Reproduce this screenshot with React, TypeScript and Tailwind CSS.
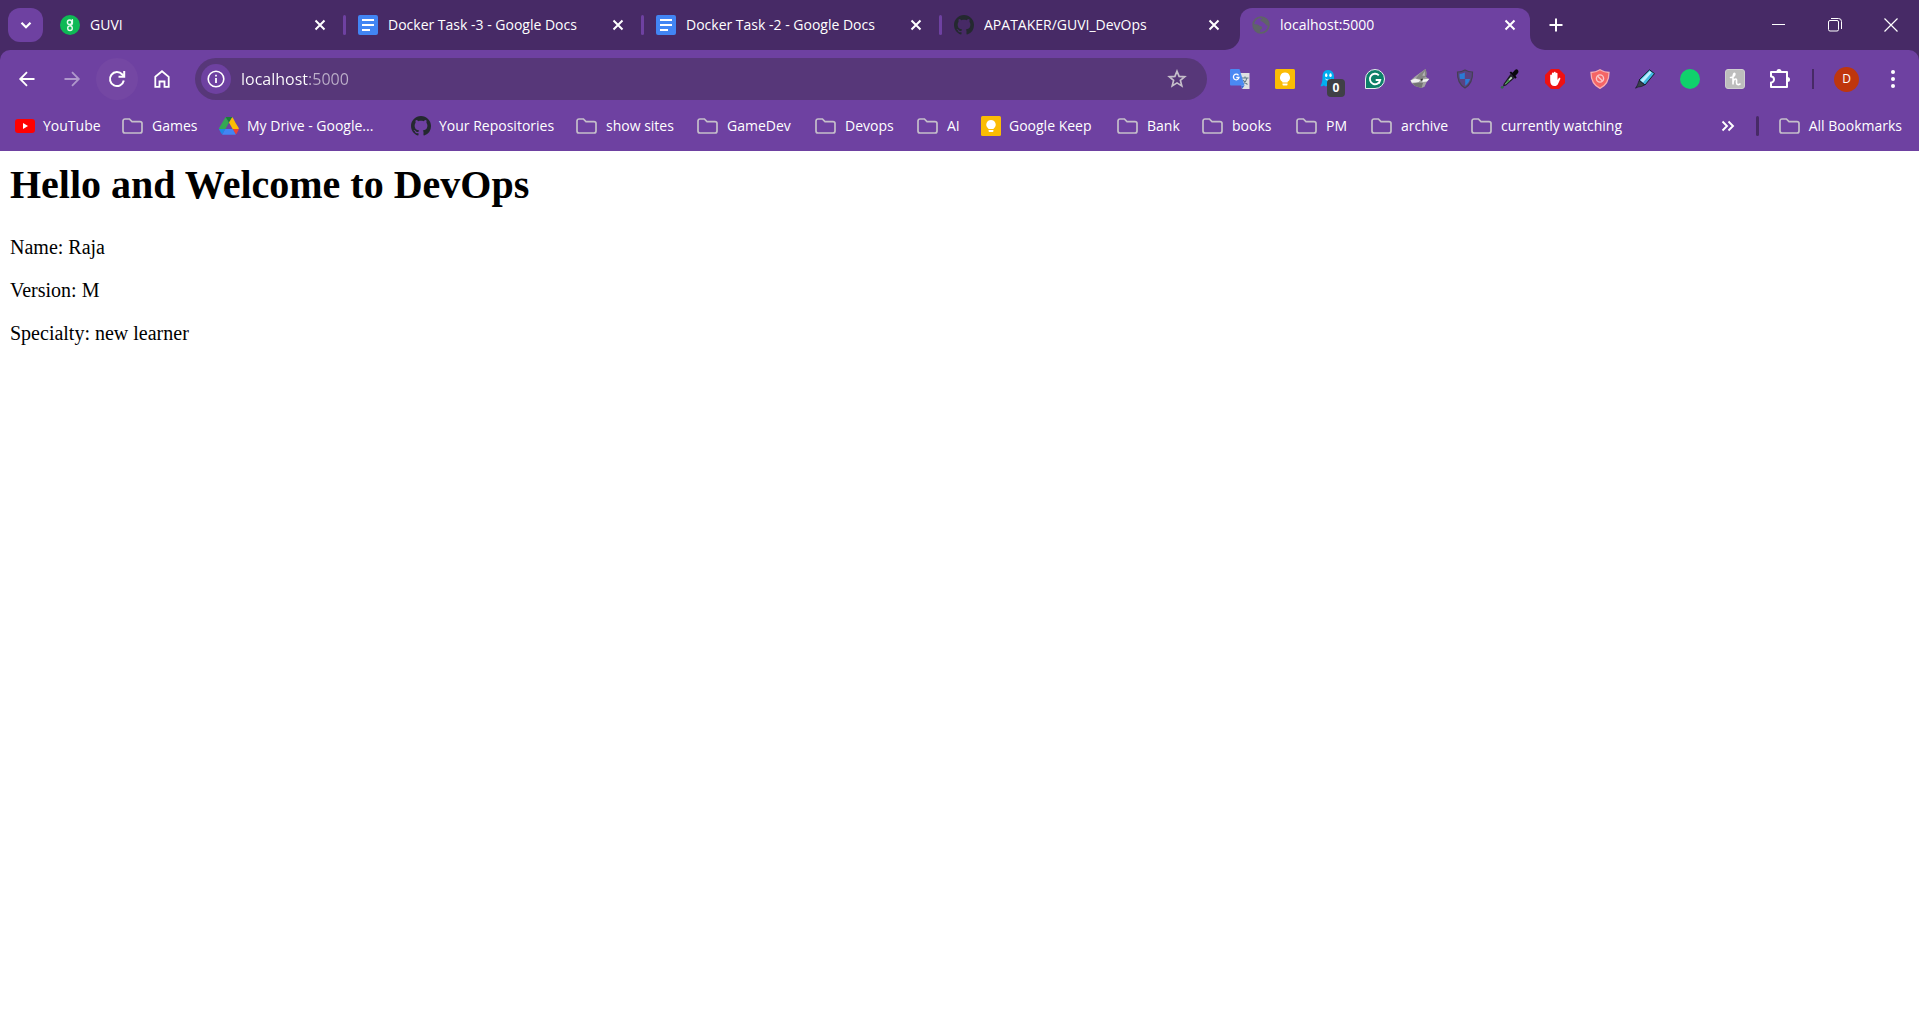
import React from "react";
import type { ReactNode } from "react";

/* ---------- Icons ---------- */

const Guvi = () => (
  <svg viewBox="0 0 20 20" className="size-5 shrink-0" aria-hidden="true">
    <circle cx="10" cy="10" r="10" fill="#0fb955" />
    <g fill="none" stroke="#e9fbf0" strokeWidth="1.4" strokeLinecap="round">
      <circle cx="9.6" cy="7.2" r="2.2" />
      <circle cx="10" cy="13.2" r="2.3" />
      <path d="M12.400 4.800v3.400c0 1.200-.9 2-2 2.200" />
    </g>
  </svg>
);

const Docs = () => (
  <svg viewBox="0 0 20 20" className="size-5 shrink-0" aria-hidden="true">
    <rect width="20" height="20" rx="2" fill="#4285f4" />
    <path d="M4 5h12M4 10h12M4 15h8" stroke="#fff" strokeWidth="2" />
  </svg>
);

const GitHub = () => (
  <svg viewBox="0 0 16 16" className="size-5 shrink-0" aria-hidden="true">
    <path
      fill="#24292f"
      d="M8 0C3.580 0 0 3.580 0 8c0 3.540 2.290 6.530 5.470 7.590.4.070.55-.17.55-.38 0-.19-.01-.82-.01-1.490-2.010.37-2.530-.49-2.690-.94-.09-.23-.48-.94-.82-1.130-.28-.15-.68-.52-.01-.53.63-.01 1.080.58 1.230.82.72 1.210 1.870.87 2.330.66.07-.52.28-.87.51-1.070-1.780-.2-3.640-.89-3.640-3.950 0-.87.31-1.590.82-2.150-.08-.2-.36-1.020.08-2.120 0 0 .67-.21 2.200.82.64-.18 1.320-.27 2-.27s1.360.09 2 .27c1.530-1.040 2.200-.82 2.200-.82.44 1.100.16 1.920.08 2.120.51.56.82 1.270.82 2.150 0 3.070-1.870 3.750-3.650 3.950.29.25.54.73.54 1.480 0 1.070-.01 1.930-.01 2.200 0 .21.15.46.55.38A8.010 8.010 0 0 0 16 8c0-4.420-3.580-8-8-8Z"
    />
  </svg>
);

const Globe = () => (
  <svg viewBox="0 0 18 18" className="size-[18px] shrink-0" aria-hidden="true">
    <circle cx="9" cy="9" r="7.800" fill="none" stroke="#5f6368" strokeWidth="1.800" />
    <path
      fill="#5f6368"
      d="M11 1.500c-.6 1.500-2 1.300-2.500 2.300-.4 1 .3 1.700 1.300 1.800 1.300.2 1.400 1.400 2.500 1.700 1.400.4 1.200 1.800 2.300 2.200 1 .3 1.700 0 2.300-.8C17 5 14.500 2 11 1.500ZM1.200 7.800c1.400.2 2.300.6 3.800.6 2 0 2.200 1.600 3.900 1.900 1.700.3 1.700 2.200.3 2.900-1.200.6-.7 2-1.700 3.600C3.500 16.300.5 12.500 1.200 7.800Z"
    />
  </svg>
);

const YouTube = () => (
  <svg viewBox="0 0 20 20" className="size-5 shrink-0" aria-hidden="true">
    <rect y="3" width="20" height="14" rx="3" fill="#f00" />
    <path d="M8 7v6l5-3z" fill="#fff" />
  </svg>
);

const Drive = () => (
  <svg viewBox="0 0 88 88" className="size-5 shrink-0" aria-hidden="true">
    <g transform="translate(0 4)">
      <path fill="#1e88e5" d="m7 67 4 7c1 1 2 2 3 3l14-24H0c0 2 0 3 1 4z" />
      <path fill="#34a853" d="M44 25 30 1c-2 1-3 2-3 3L1 48c-1 2-1 3-1 5h28z" />
      <path fill="#ea4335" d="M74 77c1-1 2-2 3-3l8-14c1-2 2-4 2-7H60l6 11z" />
      <path fill="#188038" d="M44 25 58 1c-2-1-3-1-5-1H35c-2 0-4 0-5 1z" />
      <path fill="#4285f4" d="M60 53H28L14 77c1 1 3 1 4 1h51c2 0 3 0 5-1z" />
      <path fill="#fbbc04" d="M73 27 61 4c-1-1-2-2-3-3L44 25l16 28h27c0-2 0-3-1-5z" />
    </g>
  </svg>
);

const Keep = () => (
  <svg viewBox="0 0 20 20" className="size-5 shrink-0" aria-hidden="true">
    <rect width="20" height="20" rx="1.500" fill="#fbbc04" />
    <path
      fill="#fff"
      d="M10 4a4.700 4.700 0 0 0-3 8.300c.4.300.600.500.6.700h4.800c0-.2.200-.4.600-.7A4.700 4.700 0 0 0 10 4ZM7.600 14h4.800v1.200c0 .5-.3.800-.8.800H8.400c-.5 0-.8-.3-.8-.8z"
    />
  </svg>
);

const Folder = () => (
  <svg viewBox="0 0 21 16" className="mr-px h-4 w-[21px] shrink-0" aria-hidden="true">
    <path
      d="M1 13V3a2 2 0 0 1 2-2h4.400l2.600 2.600h8a2 2 0 0 1 2 2V13a2 2 0 0 1-2 2H3a2 2 0 0 1-2-2Z"
      fill="none"
      stroke="#c5bfca"
      strokeWidth="1.700"
    />
  </svg>
);

const Close = () => (
  <svg viewBox="0 0 20 20" className="size-5" aria-hidden="true">
    <path d="m5.500 5.500 9 9m0-9-9 9" stroke="#fff" strokeWidth="2" />
  </svg>
);

/* ---------- Tab strip ---------- */

type TabProps = { icon: ReactNode; title: string; active?: boolean; divider?: boolean };

function Tab({ icon, title, active, divider }: TabProps) {
  return (
    <div
      className={
        active
          ? "relative mt-2 flex h-[42px] min-w-0 shrink basis-[290px] items-center rounded-t-xl bg-[#6e41a1] pb-2 pr-2.5 pl-3"
          : "flex h-[50px] min-w-0 shrink basis-[298px] items-center pl-3"
      }
    >
      {active && (
        <>
          <svg viewBox="0 0 15 15" className="absolute bottom-0 -left-[15px] size-[15px]" aria-hidden="true">
            <path d="M15 0v15H0A15 15 0 0 0 15 0Z" fill="#6e41a1" />
          </svg>
          <svg viewBox="0 0 15 15" className="absolute -right-[15px] bottom-0 size-[15px]" aria-hidden="true">
            <path d="M0 0v15h15A15 15 0 0 1 0 0Z" fill="#6e41a1" />
          </svg>
        </>
      )}
      <button type="button" className="flex min-w-0 flex-1 items-center gap-2.5 text-left text-sm">
        {icon}
        <span className="truncate">{title}</span>
      </button>
      <button type="button" aria-label={`Close ${title}`} className="shrink-0">
        <Close />
      </button>
      {!active && <span className={divider ? "ml-[13px] h-5 w-[3px] rounded-sm bg-[#6e41a1]" : "ml-4"} />}
    </div>
  );
}

function TabStrip() {
  return (
    <div className="flex h-[50px] items-center bg-[#472a66] pl-2">
      <button
        type="button"
        aria-label="Search tabs"
        className="mr-[5px] flex h-[34px] w-[35px] shrink-0 items-center justify-center rounded-xl bg-[#6e41a1]"
      >
        <svg viewBox="0 0 20 20" className="size-5" aria-hidden="true">
          <path d="m5.500 7.800 4.500 4.400 4.500-4.400" fill="none" stroke="#fff" strokeWidth="2.200" />
        </svg>
      </button>
      <Tab icon={<Guvi />} title="GUVI" divider />
      <Tab icon={<Docs />} title="Docker Task -3 - Google Docs" divider />
      <Tab icon={<Docs />} title="Docker Task -2 - Google Docs" divider />
      <Tab icon={<GitHub />} title="APATAKER/GUVI_DevOps" />
      <Tab icon={<Globe />} title="localhost:5000" active />
      <button type="button" aria-label="New tab" className="ml-4 shrink-0">
        <svg viewBox="0 0 20 20" className="size-5" aria-hidden="true">
          <path d="M10 3.500v13M3.500 10h13" stroke="#fff" strokeWidth="2" />
        </svg>
      </button>
      <div className="ml-auto flex shrink-0 text-white">
        <button type="button" aria-label="Minimize" className="flex h-[50px] w-14 items-center justify-center">
          <svg viewBox="0 0 14 14" className="size-3.5" aria-hidden="true">
            <path d="M0 6.500h13" stroke="currentColor" />
          </svg>
        </button>
        <button type="button" aria-label="Restore" className="flex h-[50px] w-14 items-center justify-center">
          <svg viewBox="0 0 14 14" className="size-3.5" fill="none" stroke="currentColor" aria-hidden="true">
            <rect x="0.500" y="2.500" width="10" height="10.500" rx="1.500" />
            <path d="M3 .5h7.500a3 3 0 0 1 3 3V11" />
          </svg>
        </button>
        <button type="button" aria-label="Close window" className="flex h-[50px] w-14 items-center justify-center">
          <svg viewBox="0 0 14 14" className="size-3.5" stroke="currentColor" strokeWidth="1.200" aria-hidden="true">
            <path d="m.5.5 13 13m0-13-13 13" />
          </svg>
        </button>
      </div>
    </div>
  );
}

/* ---------- Toolbar ---------- */

const extensions: { name: string; art: ReactNode }[] = [
  {
    name: "Google Translate",
    art: (
      <>
        <path d="M9 4h10.500v16H12z" fill="#dfe0e2" />
        <path d="M12 9h6.500M15 7.500V9m2 0c-.6 2.600-2 4.600-4 6m.2-4c1 2 2.500 3.500 4.300 4.500" fill="none" stroke="#607988" strokeWidth="1.100" />
        <path d="M11 16.500h3.500L12 20z" fill="#3367d6" />
        <path d="M1 0h8.500l5 16.500H1a1 1 0 0 1-1-1V1a1 1 0 0 1 1-1Z" fill="#4a89f3" />
        <path d="M8.500 6.300A2.800 2.800 0 1 0 9 8.500H6.300" fill="none" stroke="#fff" strokeWidth="1.300" />
      </>
    ),
  },
  {
    name: "Google Keep",
    art: (
      <>
        <rect width="20" height="20" rx="1.500" fill="#fbbc04" />
        <path d="M10 3.500a5 5 0 0 0-3 9c.3.200.4.500.4.900h5.200c0-.4.1-.7.4-.9a5 5 0 0 0-3-9ZM7.500 14.400h5v1.300c0 .5-.3.800-.8.800H8.300c-.5 0-.8-.3-.8-.8z" fill="#fff" />
      </>
    ),
  },
  {
    name: "Ghostery",
    art: (
      <>
        <path d="M8 1c-4 0-5.500 3-5.500 7 0 3-.3 6-2 9 1.500.5 2.500.2 3.500-.7.500 1 1.500 1.500 2.500.7 1 1 2.500 1 3.500 0l4-1V8c0-4-2-7-6-7Z" fill="#00aef0" />
        <ellipse cx="6.200" cy="6.200" rx="1.200" ry="1.900" fill="#fff" />
        <ellipse cx="10.500" cy="6.200" rx="1.200" ry="1.900" fill="#fff" />
        <path d="M5.500 10c1.500 1.500 4 1.500 5.500 0" stroke="#fff" strokeWidth="1" fill="none" />
      </>
    ),
  },
  {
    name: "Grammarly",
    art: (
      <>
        <path d="M10 .5A9.500 9.500 0 1 1 10 19.500H.5V10A9.500 9.500 0 0 1 10 .5Z" fill="#0c8068" stroke="#e4efec" />
        <path d="M13.800 6.300A5.200 5.200 0 1 0 15.200 11h-4.500M15.200 11l-1.300 3.500" fill="none" stroke="#fff" strokeWidth="1.900" />
      </>
    ),
  },
  {
    name: "Fox",
    art: (
      <>
        <path d="M15.500 0c1 3 1.200 5 .3 7.800l3.500 2.500-2.500 2.500-2.300 5-3 1.200L5 17l-3.500-3-1-2.500L5 7.500Z" fill="#a3a3a3" />
        <path d="M15.500 0 9 5.500 6 9.500l5 .5 5-2.200C17 5 16.500 2.500 15.500 0Z" fill="#848484" />
        <path d="m14.800 2-2.600 4.500 2.600.5z" fill="#b5b5b5" />
        <path d="M.5 11.500 5 9.500l5.500 1.500-2 2.200-6.500.6Z" fill="#efefef" />
        <path d="m12 10.500 7.300-.8-2.300 2.800-4.500.5z" fill="#f5f5f5" />
        <path d="M2.500 14.500 9 13.500l4 .5-1.500 5L5 17z" fill="#747474" />
        <path d="m10.500 10 2.500-.5-.5 2-1.500.3z" fill="#2d2d2d" />
      </>
    ),
  },
  {
    name: "Shield",
    art: (
      <>
        <path d="M10 1c2.500 1.500 5 2 7.500 2 .3 7-1.500 12.500-7.500 16C4 15.500 2.200 10 2.500 3 5 3 7.500 2.500 10 1Z" fill="#5b4282" stroke="#444154" strokeWidth="1.200" />
        <path d="M4.500 4.800c2 0 3.700-.5 5.300-1.300V10H5c-.4-1.600-.6-3.300-.5-5.200Z" fill="#2b7bd6" />
        <path d="M10.200 10H15c-.8 3-2.300 5-4.800 6.700z" fill="#2b7bd6" />
      </>
    ),
  },
  {
    name: "Color picker",
    art: (
      <>
        <path d="m10.500 5 4 4L6 16.500l-3 1 .5-2.500z" fill="#1c1c22" />
        <path d="m11 7.500 1.500 1.500-6.500 6-1.500.5z" fill="#b8d8b8" />
        <path d="m8.500 10.500 1.500 1.200-4 3.500-1.200.2z" fill="#3f8f4c" />
        <path d="M9.500 3.500 11 2.500l1.500 1.200L15 1c2-2 4.500.8 3 3l-2.500 2.700 1.200 1.800-1.500 1.300z" fill="#08080c" />
        <circle cx="2.200" cy="18.300" r="1.400" fill="#30694a" />
      </>
    ),
  },
  {
    name: "AdBlock",
    art: (
      <>
        <path d="M6 0h8l6 6v8l-6 6H6l-6-6V6z" fill="#ee1111" />
        <path
          d="M5.200 11.500V6.200c0-1.100 1.700-1.100 1.700 0V4.300c0-1.100 1.900-1.100 1.900 0v-.7c0-1.100 1.900-1.100 1.900 0v1c0-1.100 1.800-1.100 1.800 0v6.400l1.200-1.700c.7-1 2-.4 1.600.7l-2.300 4.900c-.8 1.400-1.700 2.100-3.600 2.100-2.500 0-4.200-1.800-4.200-5.500Z"
          fill="#fff"
        />
      </>
    ),
  },
  {
    name: "Ad shield",
    art: (
      <>
        <path d="M10 .7c3 1.800 6 2.700 9 2.800 0 8-2.500 12.800-9 15.800C3.500 16.300 1 11.500 1 3.500 4 3.400 7 2.500 10 .7Z" fill="#f56565" stroke="#f9aeb0" strokeWidth="1.300" />
        <circle cx="10" cy="9.500" r="3.600" fill="none" stroke="#f9c9cb" strokeWidth="1.400" />
        <path d="m7.500 7 5 5" stroke="#f9c9cb" strokeWidth="1.400" />
      </>
    ),
  },
  {
    name: "Highlighter",
    art: (
      <>
        <path d="M14.500.8 19.500 4.600 10 16l-6-5z" fill="#3fb8e2" stroke="#15202b" strokeWidth="1" strokeLinejoin="round" />
        <path d="m14.700 2 2 1.600L8 13.500l-2.500-2.200z" fill="#bdeeff" />
        <path d="M4 11.500 9.500 16l-3 1.500-3.500.5-2.500 1.200L2.500 16z" fill="#39424c" stroke="#11161c" strokeWidth=".6" />
      </>
    ),
  },
  { name: "Status", art: <circle cx="10" cy="10" r="10" fill="#10d16c" /> },
  {
    name: "Honey",
    art: (
      <>
        <rect x=".5" y=".5" width="19" height="19" rx="2.500" fill="#bdbdbd" stroke="#cfcfcf" />
        <path d="M5.500 8.500C8 8.500 10.500 6 9.800 4.500 9 3.500 8 6 8 9v6.500c0-3 1-5.500 2.500-5.500s1 2 1 3.500c0 2.500 2 2.500 3.500 1.500" fill="none" stroke="#fff" strokeWidth="1.600" strokeLinecap="round" />
      </>
    ),
  },
];

function ExtensionBar() {
  return (
    <div className="ml-2.5 flex shrink-0 items-center pr-1">
      {extensions.map(({ name, art }) => (
        <button
          key={name}
          type="button"
          aria-label={name}
          className="relative flex h-10 w-[45px] items-center justify-center"
        >
          <svg viewBox="0 0 20 20" className="size-5" aria-hidden="true">
            {art}
          </svg>
          {name === "Ghostery" && (
            <span className="absolute top-5 left-5 flex size-[18px] items-center justify-center rounded-sm bg-[#3f4046] text-xs font-bold text-white">
              0
            </span>
          )}
        </button>
      ))}
      <button type="button" aria-label="Extensions" className="flex h-10 w-[45px] items-center justify-center">
        <svg viewBox="0 0 24 24" className="size-6" fill="none" aria-hidden="true">
          <path
            d="M3 5h16v15H3v-4.500a3 3 0 0 0 0-6Z"
            stroke="#fff"
            strokeWidth="2"
            strokeLinejoin="round"
          />
          <path d="M8.500 4.500a2.500 2.500 0 0 1 5 0zM19.500 10a2.500 2.500 0 0 1 0 5z" fill="#fff" />
        </svg>
      </button>
      <span className="mr-5 ml-2.5 h-5 w-0.5 bg-[#472a66]" />
      <button
        type="button"
        aria-label="Profile"
        className="flex size-[25px] items-center justify-center rounded-full bg-[#bf360c] text-xs text-white"
      >
        D
      </button>
      <button type="button" aria-label="Menu" className="ml-[11px] flex w-[45px] justify-center">
        <svg viewBox="0 0 20 20" className="size-5" fill="#fff" aria-hidden="true">
          <circle cx="10" cy="3" r="2" />
          <circle cx="10" cy="10" r="2" />
          <circle cx="10" cy="17" r="2" />
        </svg>
      </button>
    </div>
  );
}

function NavButton({ label, className = "", children }: { label: string; className?: string; children: ReactNode }) {
  return (
    <button type="button" aria-label={label} className={`flex size-[42px] items-center justify-center rounded-full ${className}`}>
      <svg viewBox="0 0 20 20" className="size-5" fill="none" stroke="currentColor" strokeWidth="1.800" aria-hidden="true">
        {children}
      </svg>
    </button>
  );
}

function Toolbar() {
  return (
    <div className="flex items-center pt-2">
      <div className="flex shrink-0 gap-[3px] pl-1.5">
        <NavButton label="Back">
          <path d="M17.500 10H3.500M10 3.200 3.200 10l6.800 6.800" />
        </NavButton>
        <NavButton label="Forward" className="opacity-45">
          <path d="M2.500 10h14M10 3.200l6.800 6.800-6.800 6.800" />
        </NavButton>
        <NavButton label="Reload" className="bg-[#7447a3]">
          <path d="M16.800 11.500a7 7 0 1 1-1.500-6l1.500 1.500" strokeWidth="2" />
          <path d="M17.200 2v5.700h-5.700" strokeWidth="2" />
        </NavButton>
        <NavButton label="Home">
          <path d="M3.300 7.800 10 2.200l6.700 5.600v10h-4.200v-5.300h-5v5.300H3.300z" />
        </NavButton>
      </div>
      <form className="ml-3 flex h-[42px] min-w-0 flex-1 items-center rounded-full bg-[#573779] pr-5 pl-1.5">
        <button
          type="button"
          aria-label="Site information"
          className="flex size-[30px] shrink-0 items-center justify-center rounded-full bg-[#6e41a1]"
        >
          <svg viewBox="0 0 18 18" className="size-[18px]" aria-hidden="true">
            <circle cx="9" cy="9" r="7.800" fill="none" stroke="#fff" strokeWidth="1.600" />
            <path d="M9 8v5M9 4.800v1.800" stroke="#fff" strokeWidth="1.800" />
          </svg>
        </button>
        <input
          type="text"
          aria-label="Address"
          defaultValue="localhost:5000"
          className="ml-2.5 h-7 min-w-0 flex-1 bg-linear-to-r from-white from-[68px] to-[#bcafc9] to-[68px] bg-clip-text text-base text-transparent outline-none"
        />
        <button type="button" aria-label="Bookmark this page" className="shrink-0">
          <svg viewBox="0 0 20 20" className="size-5" aria-hidden="true">
            <path
              d="m10 2.200 2.100 5.200 5.600.4-4.300 3.600 1.400 5.500-4.800-3-4.800 3 1.400-5.500-4.300-3.600 5.600-.4z"
              fill="none"
              stroke="#c5bfca"
              strokeWidth="1.700"
            />
          </svg>
        </button>
      </form>
      <ExtensionBar />
    </div>
  );
}

/* ---------- Bookmarks ---------- */

const bookmarks: { label: string; icon: ReactNode; width: string }[] = [
  { label: "YouTube", icon: <YouTube />, width: "w-[107px]" },
  { label: "Games", icon: <Folder />, width: "w-[97px]" },
  { label: "My Drive - Google...", icon: <Drive />, width: "w-[192px]" },
  { label: "Your Repositories", icon: <GitHub />, width: "w-[165px]" },
  { label: "show sites", icon: <Folder />, width: "w-[121px]" },
  { label: "GameDev", icon: <Folder />, width: "w-[118px]" },
  { label: "Devops", icon: <Folder />, width: "w-[102px]" },
  { label: "AI", icon: <Folder />, width: "w-[64px]" },
  { label: "Google Keep", icon: <Keep />, width: "w-[136px]" },
  { label: "Bank", icon: <Folder />, width: "w-[85px]" },
  { label: "books", icon: <Folder />, width: "w-[94px]" },
  { label: "PM", icon: <Folder />, width: "w-[75px]" },
  { label: "archive", icon: <Folder />, width: "w-[100px]" },
  { label: "currently watching", icon: <Folder />, width: "w-[160px]" },
];

function BookmarksBar() {
  return (
    <nav aria-label="Bookmarks" className="flex h-[51px] items-center pr-[17px] pl-[15px] text-sm">
      <div className="flex min-w-0 flex-1 overflow-hidden">
        {bookmarks.map(({ label, icon, width }) => (
          <a key={label} href="#" className={`flex shrink-0 items-center gap-2 whitespace-nowrap ${width}`}>
            {icon}
            {label}
          </a>
        ))}
      </div>
      <button type="button" aria-label="More bookmarks" className="shrink-0">
        <svg viewBox="0 0 20 20" className="size-5" fill="none" stroke="#fff" strokeWidth="1.900" aria-hidden="true">
          <path d="m4.500 5.500 4.500 4.500-4.500 4.500m6-9 4.500 4.500-4.500 4.500" />
        </svg>
      </button>
      <span className="mr-5 ml-[18px] h-5 w-[3px] shrink-0 rounded-sm bg-[#472a66]" />
      <a href="#" className="flex shrink-0 items-center gap-2 whitespace-nowrap">
        <Folder />
        All Bookmarks
      </a>
    </nav>
  );
}

export default function App() {
  return (
    <div className="min-h-screen bg-white">
      <header className="bg-[#472a66] font-['Open_Sans',sans-serif] text-white">
        <TabStrip />
        <div className="rounded-t-[10px] bg-[#6e41a1]">
          <Toolbar />
          <BookmarksBar />
        </div>
      </header>
      <main className="px-2.5 pt-[11px] font-['Liberation_Serif',serif] text-xl text-black">
        <h1 className="text-[40px] leading-[46px] font-bold">Hello and Welcome to DevOps</h1>
        <div className="mt-7 flex flex-col gap-5 leading-[23px]">
          <p>Name: Raja</p>
          <p>Version: M</p>
          <p>Specialty: new learner</p>
        </div>
      </main>
    </div>
  );
}
